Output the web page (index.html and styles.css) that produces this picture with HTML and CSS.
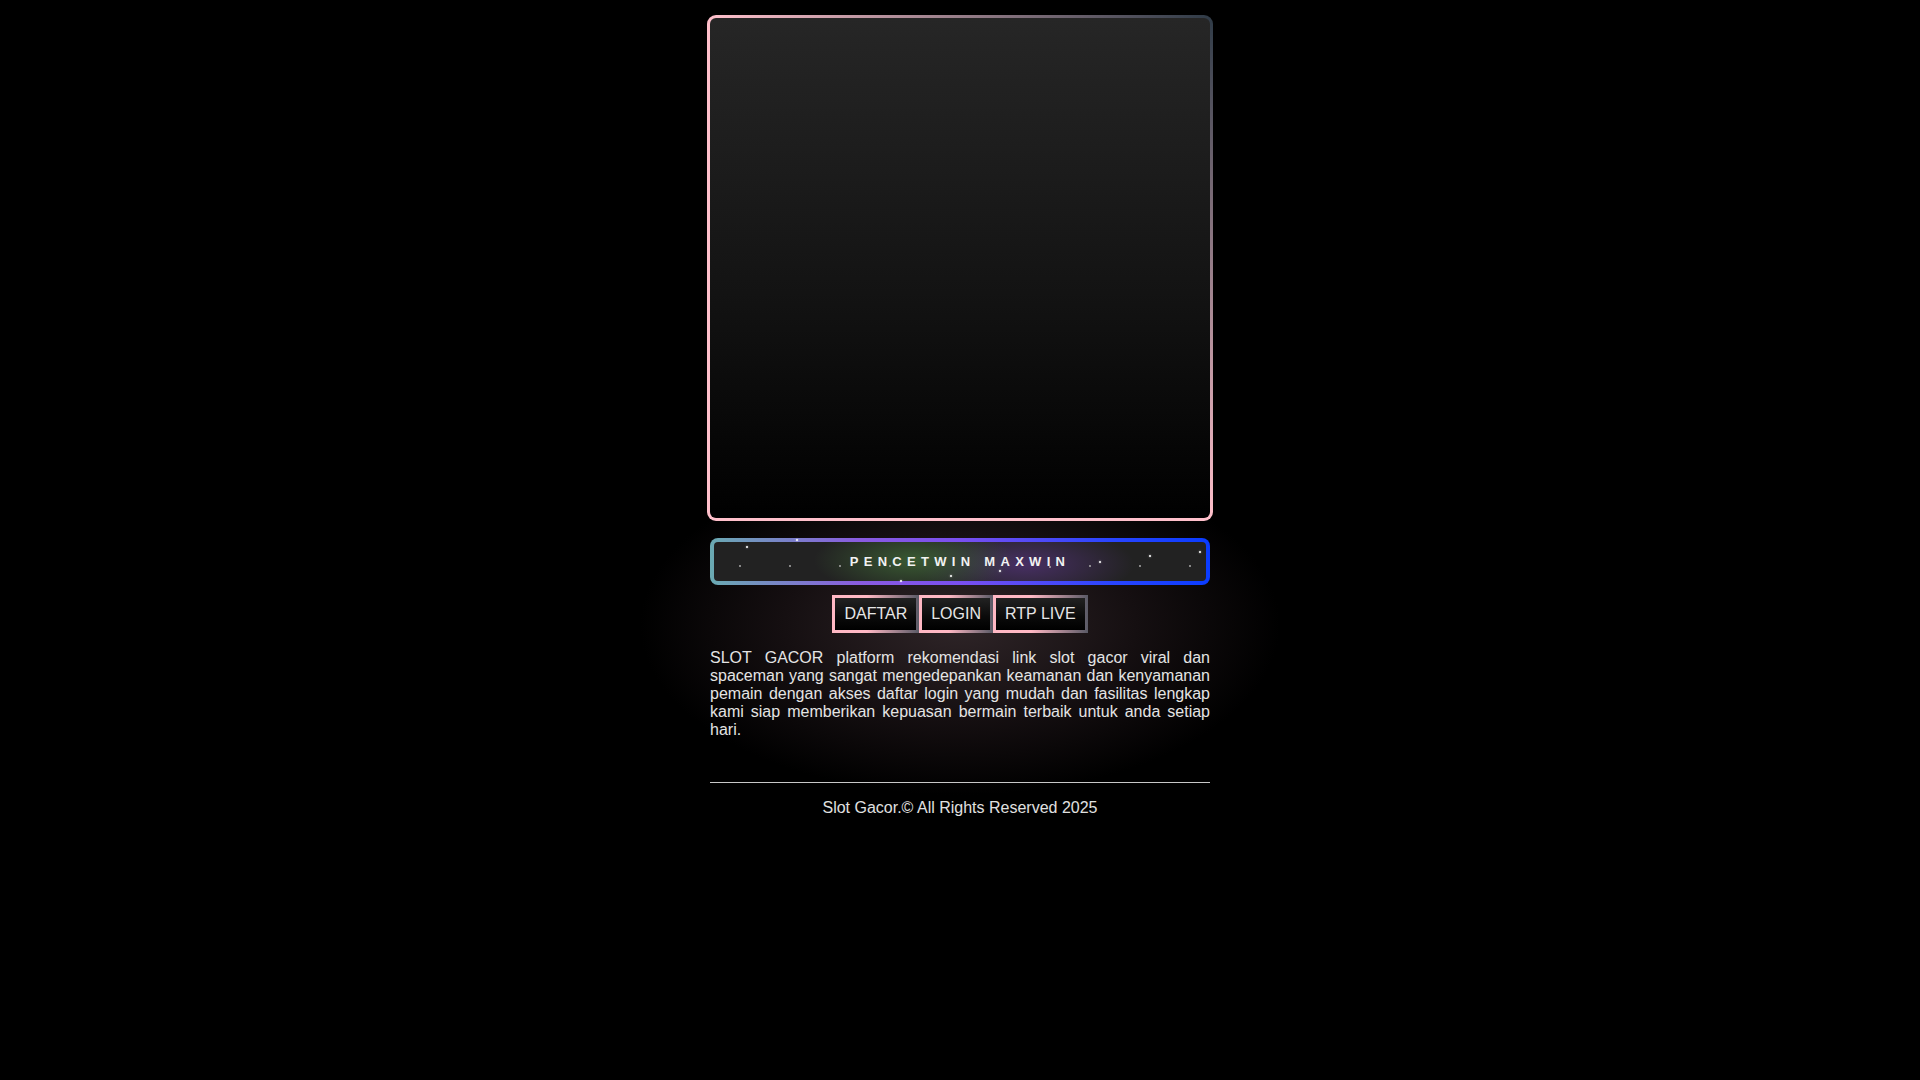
FILE: index.html
```html
<!DOCTYPE html>
<html lang="id">
<head>
<meta charset="utf-8">
<title>Slot Gacor</title>
<link rel="stylesheet" href="styles.css">
</head>
<body>
<div class="wrap">
  <div class="hero"></div>
  <div class="banner">
    <span class="star" style="left:32px;top:4px"></span>
    <span class="star" style="left:82px;top:-3px"></span>
    <span class="star dim" style="left:25px;top:23px"></span>
    <span class="star dim" style="left:75px;top:23px"></span>
    <span class="star dim" style="left:125px;top:23px"></span>
    <span class="star dim" style="left:175px;top:23px"></span>
    <span class="star" style="left:186px;top:38px"></span>
    <span class="star" style="left:236px;top:33px"></span>
    <span class="star" style="left:285px;top:28px"></span>
    <span class="star dim" style="left:335px;top:24px"></span>
    <span class="star dim" style="left:375px;top:23px"></span>
    <span class="star" style="left:385px;top:19px"></span>
    <span class="star dim" style="left:425px;top:23px"></span>
    <span class="star" style="left:435px;top:13px"></span>
    <span class="star dim" style="left:475px;top:23px"></span>
    <span class="star" style="left:485px;top:9px"></span>
    <span class="banner-text">PENCETWIN MAXWIN</span>
  </div>
  <nav class="buttons">
    <a class="btn" href="#">DAFTAR</a>
    <a class="btn" href="#">LOGIN</a>
    <a class="btn" href="#">RTP LIVE</a>
  </nav>
  <p class="desc">SLOT GACOR platform rekomendasi link slot gacor viral dan spaceman yang sangat mengedepankan keamanan dan kenyamanan pemain dengan akses daftar login yang mudah dan fasilitas lengkap kami siap memberikan kepuasan bermain terbaik untuk anda setiap hari.</p>
  <hr class="rule">
  <p class="footer">Slot Gacor.© All Rights Reserved 2025</p>
</div>
</body>
</html>
```

FILE: styles.css
```css
html, body {
  margin: 0;
  padding: 0;
}
body {
  min-height: 1080px;
  background: #000 radial-gradient(ellipse 320px 170px at 960px 625px, #2f2528 0%, #150f11 55%, #000 100%) no-repeat;
  font-family: "Liberation Sans", Arial, sans-serif;
  color: #e2e2e2;
}
.wrap {
  width: 500px;
  margin: 0 auto;
  padding-top: 15px;
  display: flex;
  flex-direction: column;
  align-items: center;
}
.hero {
  width: 500px;
  height: 500px;
  margin: 0 -3px;
  border: 3px solid transparent;
  border-radius: 9px;
  background:
    linear-gradient(to bottom, #262626 0%, #131313 55%, #000 100%) padding-box,
    linear-gradient(to top right, #ffc0cb 50%, #2e3a46 100%) border-box;
}
.banner {
  position: relative;
  box-sizing: border-box;
  width: 500px;
  height: 47px;
  margin-top: 17px;
  border: 4px solid transparent;
  border-radius: 8px;
  display: flex;
  align-items: center;
  justify-content: center;
  background:
    radial-gradient(ellipse 100px 36px at 200px 18px, rgba(60, 96, 52, 0.9) 0%, rgba(60, 96, 52, 0) 100%) padding-box,
    radial-gradient(ellipse 110px 38px at 310px 22px, rgba(74, 48, 104, 0.95) 0%, rgba(74, 48, 104, 0) 100%) padding-box,
    linear-gradient(#222, #222) padding-box,
    linear-gradient(to right, #6aaab2 0%, #8a5be0 30%, #7a4ff0 50%, #2a45ff 80%, #0a3cff 100%) border-box;
}
.star {
  position: absolute;
  width: 2px;
  height: 2px;
  border-radius: 50%;
  background: #fff;
  box-shadow: 0 0 2px rgba(255, 255, 255, 0.7);
}
.star.dim {
  background: #aaa;
  box-shadow: none;
}
.banner-text {
  position: relative;
  font-size: 13px;
  font-weight: bold;
  letter-spacing: 5.3px;
  color: #f2f2f2;
}
.buttons {
  display: flex;
  justify-content: center;
  margin-top: 10px;
}
.btn {
  display: block;
  padding: 7px 9px;
  font-size: 16px;
  color: #e6e6e6;
  text-decoration: none;
  border: 3px solid transparent;
  background:
    linear-gradient(to bottom, #222 0%, #0a0a0a 60%, #000 100%) padding-box,
    linear-gradient(to right, #ffb8c4 40%, #5a5a66 100%) border-box;
}
.desc {
  width: 500px;
  margin: 16px 0 43px;
  font-size: 16px;
  text-align: justify;
  color: #e4e4e4;
}
.rule {
  width: 500px;
  margin: 0;
  border: 0;
  border-top: 1px solid #c8c8c8;
  height: 0;
}
.footer {
  margin: 16px 0 0;
  font-size: 16px;
  text-align: center;
  color: #e0e0e0;
}
```
